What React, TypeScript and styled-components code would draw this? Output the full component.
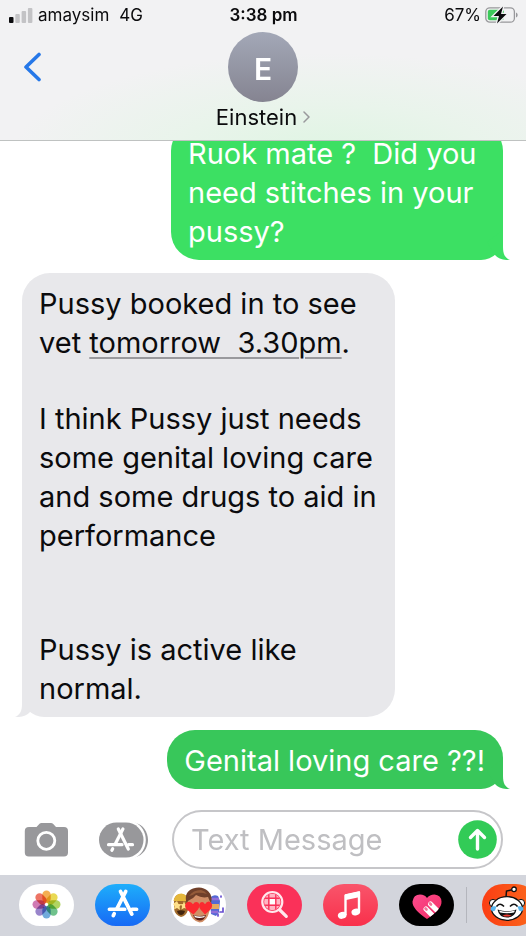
import React from "react";
import styled, { createGlobalStyle } from "styled-components";

const GlobalStyle = createGlobalStyle`
  *, *::before, *::after { box-sizing: border-box; }
  body {
    margin: 0;
    background: #ffffff;
    color: #0b0b0d;
    font-family: Inter, "Liberation Sans", sans-serif;
  }
  button { margin: 0; padding: 0; border: 0; background: none; color: inherit; font: inherit; cursor: pointer; }
  svg { display: block; }
`;

const Screen = styled.div`
  display: flex;
  flex-direction: column;
  height: 100vh;
  overflow: hidden;
  background: #ffffff;
`;

const Header = styled.header`
  flex: none;
  border-bottom: 1px solid #bfc2c1;
  background:
    radial-gradient(ellipse 60% 74% at 62% 112%, #def5e2 0%, #e9f4eb 50%, rgba(242, 242, 243, 0) 100%),
    #f2f2f3;
`;

const StatusBar = styled.div`
  display: grid;
  grid-template-columns: 1fr auto 1fr;
  align-items: center;
  height: 30px;
  padding: 0 8px 0 9px;
  font-size: 17px;
  line-height: 20px;
`;

const StatusGroup = styled.div<{ $end?: boolean }>`
  display: flex;
  align-items: center;
  justify-content: ${(p) => (p.$end ? "flex-end" : "flex-start")};
  gap: ${(p) => (p.$end ? 4 : 5)}px;
`;

const Network = styled.span`
  margin-left: 5px;
`;

const Clock = styled.time`
  font-weight: 600;
`;

const NavBar = styled.div`
  display: grid;
  grid-template-columns: 1fr auto 1fr;
  height: 110px;
  padding-top: 2px;
`;

const BackButton = styled.button`
  justify-self: start;
  align-self: start;
  margin: 20px 0 0 23px;
`;

const Contact = styled.button`
  display: flex;
  flex-direction: column;
  align-items: center;
  align-self: start;
`;

const Avatar = styled.span`
  display: flex;
  align-items: center;
  justify-content: center;
  width: 70px;
  height: 70px;
  border-radius: 50%;
  background: linear-gradient(#a3a8b7, #858491);
  color: #ffffff;
  font-size: 30px;
  font-weight: 600;
  padding-top: 3px;
`;

const ContactName = styled.span`
  display: flex;
  align-items: center;
  gap: 6px;
  font-size: 22px;
  line-height: 30px;
`;

const Thread = styled.main`
  flex: 1;
  min-height: 0;
  display: flex;
  flex-direction: column;
  justify-content: flex-end;
  gap: 13px;
  padding: 0 23px 21px 22px;
  overflow: hidden;
`;

const Bubble = styled.article<{ $sent?: boolean; $color: string; $minWidth?: number }>`
  position: relative;
  flex: none;
  align-self: ${(p) => (p.$sent ? "flex-end" : "flex-start")};
  min-width: ${(p) => p.$minWidth ?? 0}px;
  max-width: 84%;
  padding: 11px 18px 9px 17px;
  border-radius: ${(p) => (p.$sent ? "28px 28px 22px 28px" : "28px 28px 28px 22px")};
  background: ${(p) => p.$color};
  color: ${(p) => (p.$sent ? "#ffffff" : "#0b0b0d")};
  font-size: 29px;
  line-height: 39px;
  white-space: pre-wrap;
`;

const Paragraph = styled.p<{ $space?: number }>`
  margin: ${(p) => p.$space ?? 0}px 0 0;
`;

const DateLink = styled.a`
  color: inherit;
  text-decoration: underline;
  text-decoration-color: #99999d;
  text-decoration-thickness: 2px;
  text-underline-offset: 4px;
`;

const TailShape = styled.svg<{ $sent?: boolean }>`
  position: absolute;
  bottom: 0;
  ${(p) => (p.$sent ? "right: -7px;" : "left: -7px; transform: scaleX(-1);")}
`;

const Composer = styled.form`
  flex: none;
  display: flex;
  align-items: center;
  padding: 0 23px 6px 24px;
`;

const ToolButton = styled.button<{ $gap: number }>`
  flex: none;
  margin-right: ${(p) => p.$gap}px;
`;

const Field = styled.label`
  flex: 1;
  min-width: 0;
  display: flex;
  align-items: center;
  height: 59px;
  padding: 0 4px 0 17px;
  border: 2px solid #c6c6c9;
  border-radius: 30px;
  background: #ffffff;
`;

const TextInput = styled.input`
  flex: 1;
  min-width: 0;
  padding: 0;
  border: 0;
  outline: 0;
  background: transparent;
  color: #0b0b0d;
  font: inherit;
  font-size: 29px;
  line-height: 39px;
  &::placeholder { color: #bfbfc2; opacity: 1; }
`;

const AppStrip = styled.nav`
  flex: none;
  display: flex;
  align-items: flex-start;
  gap: 21px;
  height: 61px;
  padding: 9px 0 0 19px;
  background: #d3d5dc;
  overflow: hidden;
`;

const AppButton = styled.button<{ $fill: string }>`
  flex: none;
  width: 55px;
  height: 42px;
  border-radius: 21px;
  background: ${(p) => p.$fill};
  overflow: hidden;
`;

const Divider = styled.span`
  flex: none;
  width: 1px;
  height: 36px;
  margin: 3px -6px 0 -9px;
  background: #b4b6bd;
`;

function Tail({ color, sent }: { color: string; sent?: boolean }) {
  return (
    <TailShape $sent={sent} width="26" height="30" viewBox="0 0 26 30" aria-hidden="true">
      <path d="M19 0V17C19 24 21 28 26 30C20 30.500 14 28.500 11 25L3 12Z" fill={color} />
    </TailShape>
  );
}

function SignalIcon() {
  return (
    <svg width="24" height="16" viewBox="0 0 24 16" aria-label="Signal">
      <rect x="0" y="10" width="4.500" height="6" rx="1" fill="#0b0b0d" />
      <rect x="6.300" y="7" width="4.500" height="9" rx="1" fill="#c3c3c5" />
      <rect x="12.600" y="4" width="4.500" height="12" rx="1" fill="#c3c3c5" />
      <rect x="18.900" y="1" width="4.500" height="15" rx="1" fill="#c3c3c5" />
    </svg>
  );
}

function BatteryIcon() {
  return (
    <svg width="33" height="18" viewBox="0 0 33 18" aria-label="Battery charging">
      <rect x="0.800" y="1.800" width="28.600" height="14.400" rx="4" fill="none" stroke="#98989b" strokeWidth="1.300" />
      <rect x="2.800" y="3.800" width="16" height="10.400" rx="2" fill="#3cc95a" />
      <path d="M31 6.500C33.200 7.500 33.200 10.500 31 11.500Z" fill="#98989b" />
      <path d="M18 0.500L8.500 10H14L12 17.500L21.500 8H16Z" fill="#0b0b0d" stroke="#f2f2f3" strokeWidth="2.600" paintOrder="stroke" />
    </svg>
  );
}

function StoreGlyph({ width }: { width: number }) {
  return (
    <g fill="none" stroke="#ffffff" strokeWidth={width} strokeLinecap="round" strokeLinejoin="round">
      <path d="M-2.200 -11.500L7.800 8.500" />
      <path d="M2.400 -11.500L-5.200 3.500" />
      <path d="M-12 4.200H1.500M8 4.200H12" />
      <path d="M-7.800 8.200L-8.600 9.800" />
    </g>
  );
}

function CameraIcon() {
  return (
    <svg width="45" height="36" viewBox="0 0 45 36" aria-hidden="true">
      <path
        d="M5 5H12.500L15.500 1.800Q16.300 1 17.500 1H27Q28.200 1 29 1.800L32 5H40Q44 5 44 9V30.500Q44 34.500 40 34.500H4.800Q.8 34.500 .8 30.500V9Q.8 5 5 5Z"
        fill="#98989b"
      />
      <circle cx="22.300" cy="18.800" r="8.500" fill="none" stroke="#ffffff" strokeWidth="2.800" />
    </svg>
  );
}

function AppDrawerIcon() {
  return (
    <svg width="50" height="36" viewBox="0 0 50 36" aria-hidden="true">
      <path d="M36 .8C44 2.500 49 10 49 18S44 33.500 36 35.200Z" fill="#98989b" />
      <path d="M31 -1C41 0 46.800 9 46.800 18S41 36 31 37Z" fill="#ffffff" />
      <rect x="0" y="0.500" width="44.500" height="35" rx="17.500" fill="#98989b" />
      <g transform="translate(21.500 18.500)">
        <StoreGlyph width={3.2} />
      </g>
    </svg>
  );
}

const petals = ["#f2a33a", "#e6d43c", "#a5cf4b", "#5cb97c", "#5d9fd6", "#8b74c4", "#c968a8", "#ea6150"];

function PhotosIcon() {
  return (
    <svg width="55" height="42" viewBox="0 0 55 42" aria-hidden="true">
      <g transform="translate(27.500 20.500)">
        {petals.map((color, i) => (
          <rect
            key={color}
            x="-4.200"
            y="-14"
            width="8.400"
            height="12.500"
            rx="4.200"
            fill={color}
            fillOpacity="0.880"
            style={{ mixBlendMode: "multiply" }}
            transform={`rotate(${i * 45})`}
          />
        ))}
      </g>
    </svg>
  );
}

function StoreIcon() {
  return (
    <svg width="55" height="42" viewBox="0 0 55 42" aria-hidden="true">
      <g transform="translate(28 20.500) scale(1.130)">
        <StoreGlyph width={3.3} />
      </g>
    </svg>
  );
}

function MemojiIcon() {
  return (
    <svg width="55" height="42" viewBox="0 0 55 42" aria-hidden="true">
      <path d="M3 18Q3 10 10 10Q17 10 17 18V26Q15 32 10 33Q4 31 3 25Z" fill="#a06a2c" />
      <path d="M2.500 17Q4 9.500 10.500 9.500Q16 10 17 17Z" fill="#e5b73b" />
      <path d="M6 17L7.500 20L10.500 20.300L8.500 22.500L9 26L6 24L3 25.500L3.500 22L2 20Z" fill="#ffe08a" />
      <path d="M13 17L14 20L17 20.500V25L13 24L10.500 25.500L11 22L9.500 20.300L12 20Z" fill="#ffe08a" />
      <path d="M6 27Q10 25.500 14 27Q13 31 10 31Q7 31 6 27Z" fill="#43250f" />
      <path d="M39 14Q42 10 47 12L49 17L48 28L45 32L40 30Z" fill="#5269d4" />
      <path d="M39 20H48V25H39Z" fill="#e2aa62" />
      <path d="M40 15H48M40 28H47" stroke="#9270d9" strokeWidth="2.500" />
      <path d="M49 28H52V24M47 32V30M50 13V12" stroke="#674ed0" strokeWidth="1.700" fill="none" strokeLinecap="round" />
      <path d="M17 17Q18 9 28 9Q39 9 39.500 19L38.500 27Q36 38 28.500 38.500Q21 37 18.500 28Z" fill="#d08e66" />
      <path d="M15.500 19Q12.500 8 22 4.500Q31 1.500 37 7Q42 12 40 19Q38.500 17 37 13Q31 14.500 25 11Q22 15 18.500 16Q16 17 15.500 19Z" fill="#70402a" />
      <path d="M18 12Q22 6 30 6Q34 7 36 10Q30 8 25 9Q21 12 18 12Z" fill="#955b39" />
      <path d="M22.500 30.500L15 25Q12.500 20 16.500 18Q20 17 22 20.300Q24 16.700 27.200 18.500Q29.700 21 27 25.500Z" fill="#fb2a30" />
      <path d="M34 30.500L29.500 25.500Q26.500 21 29.500 18.500Q32 17 34 20.300Q36 16.500 39.500 18Q42.500 20.500 40 25Z" fill="#fb2a30" />
      <path d="M22 31Q28 33 35 31Q33.500 36.500 28.500 36.500Q24 36 22 31Z" fill="#5b201a" />
      <path d="M23 31.600Q28 33.500 34 31.700L33.200 33.300Q28 34.500 24 33.300Z" fill="#ffffff" />
    </svg>
  );
}

function ImageSearchIcon() {
  return (
    <svg width="55" height="42" viewBox="0 0 55 42" aria-hidden="true">
      <clipPath id="lens"><circle cx="25.300" cy="18" r="8.200" /></clipPath>
      <circle cx="25.300" cy="18" r="10" fill="none" stroke="#ffe9ed" strokeWidth="2.200" />
      <g clipPath="url(#lens)">
        <rect x="15" y="8" width="21" height="21" fill="#ffb5c3" />
        <rect x="22.500" y="14.700" width="6" height="6" fill="#ffffff" />
        <path d="M21.800 7V29M28.800 7V29M15 14.200H36M15 21.300H36" stroke="#fa3159" strokeWidth="1.400" />
      </g>
      <path d="M32.800 26L39.300 32.300" stroke="#ffe9ed" strokeWidth="3.200" strokeLinecap="round" />
    </svg>
  );
}

function MusicIcon() {
  return (
    <svg width="55" height="42" viewBox="0 0 55 42" aria-hidden="true">
      <path d="M22.500 31V11.500L36 8.500V27.500" fill="none" stroke="#ffffff" strokeWidth="2.400" strokeLinejoin="round" />
      <path d="M22 10.500L37 7.200V13L22 16.200Z" fill="#ffffff" />
      <ellipse cx="19.200" cy="31.300" rx="4.400" ry="3.400" fill="#ffffff" transform="rotate(-15 19.200 31.300)" />
      <ellipse cx="32.800" cy="28" rx="4.400" ry="3.400" fill="#ffffff" transform="rotate(-15 32.800 28)" />
    </svg>
  );
}

function TouchIcon() {
  return (
    <svg width="55" height="42" viewBox="0 0 55 42" aria-hidden="true">
      <defs>
        <linearGradient id="touch" x1="0" y1="0" x2="1" y2="1">
          <stop offset="0" stopColor="#fb4f91" />
          <stop offset="1" stopColor="#f42a62" />
        </linearGradient>
        <clipPath id="heart">
          <path d="M28 35Q13 25 13.500 17.500Q14.500 10.500 21 10.500Q26 10.500 28 14Q30.500 10.500 35.500 10.500Q42 11 42.500 17.500Q43 25 28 35Z" />
        </clipPath>
      </defs>
      <g clipPath="url(#heart)">
        <rect x="12" y="8" width="32" height="29" fill="url(#touch)" />
        <path d="M27 25L36 34M31.500 20L42 30.500" stroke="#ffffff" strokeWidth="5" strokeLinecap="round" />
        <path d="M26.500 24.500L27.500 25.500M31 19.500L32 20.500" stroke="#ee7899" strokeWidth="2.600" strokeLinecap="round" />
      </g>
    </svg>
  );
}

function RedditIcon() {
  return (
    <svg width="55" height="42" viewBox="3 0 55 42" aria-hidden="true">
      <path d="M27 13L27.500 7L34 5.500" fill="none" stroke="#111111" strokeWidth="1.500" />
      <circle cx="35" cy="5.300" r="2.300" fill="#ffffff" stroke="#111111" strokeWidth="1.300" />
      <circle cx="14" cy="19" r="3.600" fill="#ffffff" stroke="#111111" />
      <circle cx="42" cy="19" r="3.600" fill="#ffffff" stroke="#111111" />
      <ellipse cx="28" cy="24.500" rx="15.500" ry="11.800" fill="#ffffff" stroke="#111111" strokeWidth="1.300" />
      <path d="M18 22Q21 18.500 24.500 22M31.500 22Q35 18.500 38 22" fill="none" stroke="#111111" strokeWidth="1.700" strokeLinecap="round" />
      <path d="M18.500 25.500Q28 29 37.500 25.500Q36 33.500 28 33.500Q20 33.500 18.500 25.500Z" fill="#111111" />
      <path d="M20 26.500Q28 29 36 26.500L35 28.500Q28 30 21 28.500Z" fill="#ffffff" />
      <path d="M23.500 31.700Q28 29.500 32.500 31.700Q28 33.500 23.500 31.700Z" fill="#ed3c30" />
      <path d="M17.500 22.500Q11 21.500 11.500 25.500Q13 28.500 16 26.500ZM38.500 22.500Q45 21.500 44.500 25.500Q43 28.500 40 26.500Z" fill="#58b5ee" />
    </svg>
  );
}

const apps = [
  { name: "Photos", fill: "#ffffff", Icon: PhotosIcon },
  { name: "App Store", fill: "linear-gradient(#1eaefb, #1769f5)", Icon: StoreIcon },
  { name: "Memoji", fill: "#ffffff", Icon: MemojiIcon },
  { name: "Images", fill: "#fa3159", Icon: ImageSearchIcon },
  { name: "Music", fill: "linear-gradient(#f9556b, #f9304b)", Icon: MusicIcon },
  { name: "Digital Touch", fill: "#000000", Icon: TouchIcon },
];

const GREEN_LIGHT = "#3ce063";
const GREEN = "#38c75a";
const GRAY = "#e8e8eb";

export default function App() {
  return (
    <>
      <GlobalStyle />
      <Screen>
        <Header>
          <StatusBar>
            <StatusGroup>
              <SignalIcon />
              <span>amaysim</span>
              <Network>4G</Network>
            </StatusGroup>
            <Clock>3:38 pm</Clock>
            <StatusGroup $end>
              <span>67%</span>
              <BatteryIcon />
            </StatusGroup>
          </StatusBar>
          <NavBar>
            <BackButton type="button" aria-label="Back">
              <svg width="19" height="30" viewBox="0 0 19 30" aria-hidden="true">
                <path d="M16 2.500L3 15L16 27.500" fill="none" stroke="#2678e8" strokeWidth="3.600" strokeLinecap="round" strokeLinejoin="round" />
              </svg>
            </BackButton>
            <Contact type="button">
              <Avatar>E</Avatar>
              <ContactName>
                Einstein
                <svg width="7" height="12" viewBox="0 0 7 12" aria-hidden="true">
                  <path d="M1 1L6 6L1 11" fill="none" stroke="#99999c" strokeWidth="1.500" strokeLinecap="round" />
                </svg>
              </ContactName>
            </Contact>
          </NavBar>
        </Header>

        <Thread>
          <Bubble $sent $color={GREEN_LIGHT} $minWidth={332}>
            <Paragraph>{"Ruok mate ?  Did you\nneed stitches in your\npussy?"}</Paragraph>
            <Tail sent color={GREEN_LIGHT} />
          </Bubble>
          <Bubble $color={GRAY}>
            <Paragraph>
              {"Pussy booked in to see\nvet "}
              <DateLink href="#tomorrow">{"tomorrow  3.30pm"}</DateLink>.
            </Paragraph>
            <Paragraph $space={37}>{"I think Pussy just needs\nsome genital loving care\nand some drugs to aid in\nperformance"}</Paragraph>
            <Paragraph $space={75}>{"Pussy is active like\nnormal."}</Paragraph>
            <Tail color={GRAY} />
          </Bubble>
          <Bubble $sent $color={GREEN}>
            <Paragraph>Genital loving care ??!</Paragraph>
            <Tail sent color={GREEN} />
          </Bubble>
        </Thread>

        <Composer onSubmit={(e) => e.preventDefault()}>
          <ToolButton type="button" $gap={30} aria-label="Camera">
            <CameraIcon />
          </ToolButton>
          <ToolButton type="button" $gap={23} aria-label="Apps">
            <AppDrawerIcon />
          </ToolButton>
          <Field>
            <TextInput type="text" placeholder="Text Message" aria-label="Text Message" />
            <button type="submit" aria-label="Send">
              <svg width="39" height="39" viewBox="0 0 39 39" aria-hidden="true">
                <circle cx="19.500" cy="19.500" r="19.300" fill="#32cb57" />
                <path d="M19.500 29V11M12.500 17.500L19.500 10.500L26.500 17.500" fill="none" stroke="#ffffff" strokeWidth="3.400" strokeLinecap="round" strokeLinejoin="round" />
              </svg>
            </button>
          </Field>
        </Composer>

        <AppStrip aria-label="Message apps">
          {apps.map(({ name, fill, Icon }) => (
            <AppButton key={name} type="button" $fill={fill} aria-label={name}>
              <Icon />
            </AppButton>
          ))}
          <Divider />
          <AppButton type="button" $fill="linear-gradient(90deg, #fb3d13, #fb6a1d)" aria-label="Reddit">
            <RedditIcon />
          </AppButton>
        </AppStrip>
      </Screen>
    </>
  );
}
